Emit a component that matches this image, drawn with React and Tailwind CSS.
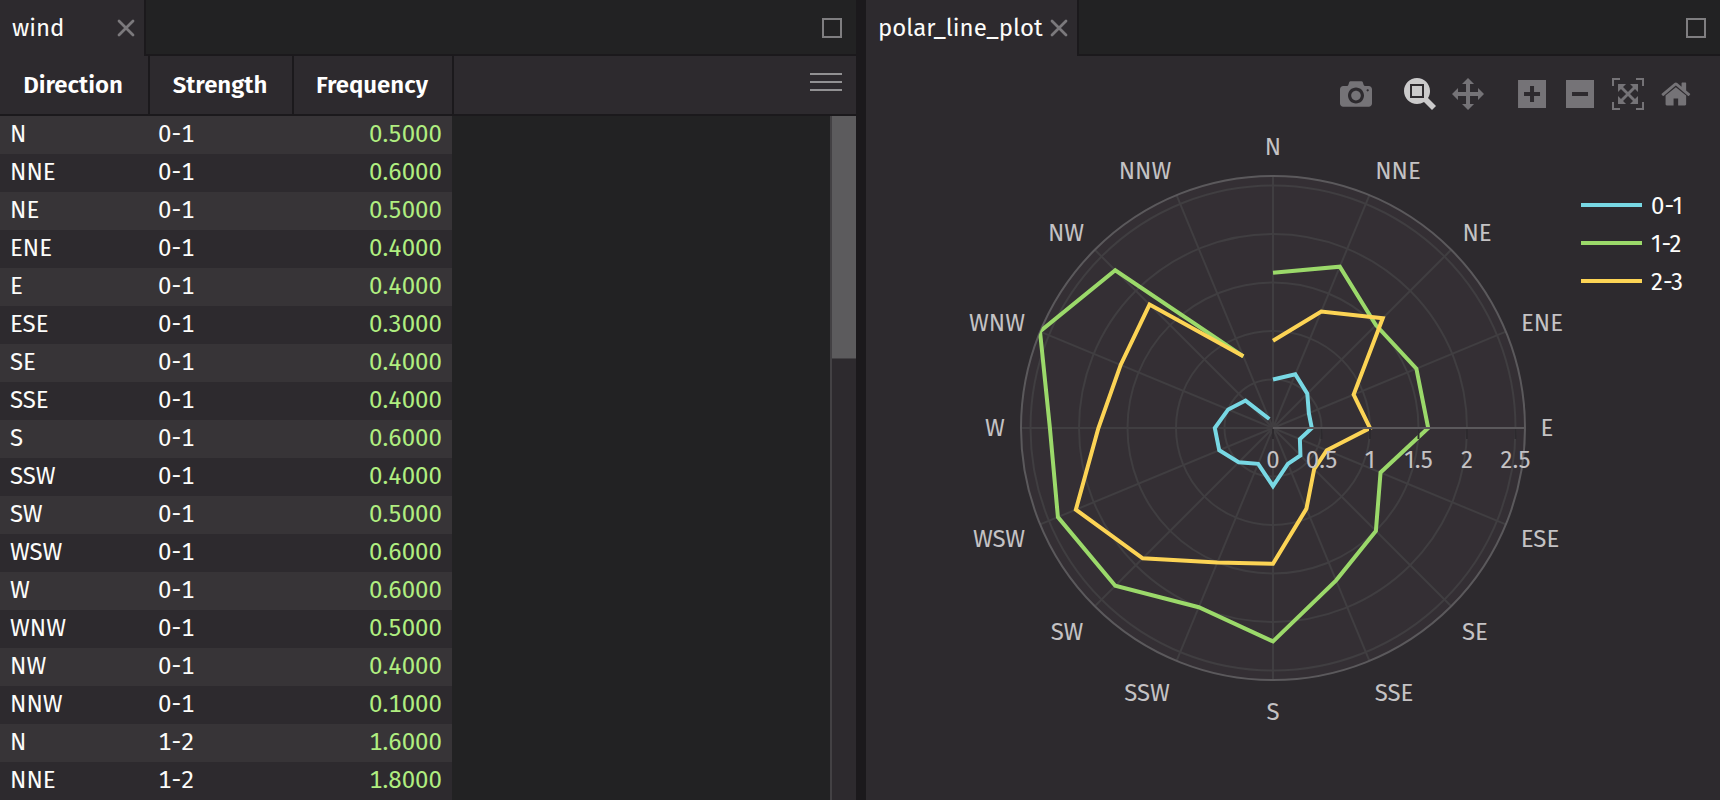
const DIRECTIONS = ['N', 'NNE', 'NE', 'ENE', 'E', 'ESE', 'SE', 'SSE', 'S', 'SSW', 'SW', 'WSW', 'W', 'WNW', 'NW', 'NNW'];

const SERIES = [
  { name: '0-1', color: '#78d8e4', values: [0.5, 0.6, 0.5, 0.4, 0.4, 0.3, 0.4, 0.4, 0.6, 0.4, 0.5, 0.6, 0.6, 0.5, 0.4, 0.1] },
  { name: '1-2', color: '#9bd96a', values: [1.6, 1.8, 1.5, 1.6, 1.6, 1.2, 1.5, 1.7, 2.2, 2.0, 2.3, 2.4, 2.3, 2.6, 2.3, 0.8] },
  { name: '2-3', color: '#fcd455', values: [0.9, 1.3, 1.6, 0.9, 1.0, 0.6, 0.6, 0.9, 1.4, 1.5, 1.9, 2.2, 1.8, 1.7, 1.8, 0.8] },
];

const ROWS = SERIES.flatMap((s) => s.values.map((v, i) => [DIRECTIONS[i], s.name, v.toFixed(4)])).slice(0, 18);

const CX = 407;
const CY = 308;
const UNIT = 97;
const RADIUS = 252;

const LABELS = [
  ['N', 407, 27], ['NNE', 532, 51], ['NE', 611, 113], ['ENE', 676, 203],
  ['E', 681, 308], ['ESE', 674, 419], ['SE', 609, 512], ['SSE', 528, 573],
  ['S', 407, 592], ['SSW', 281, 573], ['SW', 201, 512], ['WSW', 133, 419],
  ['W', 129, 308], ['WNW', 131, 203], ['NW', 200, 113], ['NNW', 279, 51],
];

const ICONS = {
  camera: [1000, 'm500 450c-83 0-150-67-150-150 0-83 67-150 150-150 83 0 150 67 150 150 0 83-67 150-150 150z m400 150h-120c-16 0-34 13-39 29l-31 93c-6 15-23 28-40 28h-340c-16 0-34-13-39-28l-31-94c-6-15-23-28-40-28h-120c-55 0-100-45-100-100v-450c0-55 45-100 100-100h800c55 0 100 45 100 100v450c0 55-45 100-100 100z m-400-550c-138 0-250 112-250 250 0 138 112 250 250 250 138 0 250-112 250-250 0-138-112-250-250-250z m365 380c-19 0-35 16-35 35 0 19 16 35 35 35 19 0 35-16 35-35 0-19-16-35-35-35z'],
  zoom: [1000, 'm1000-25l-250 251c40 63 63 138 63 218 0 224-182 406-407 406-224 0-406-182-406-406s183-406 407-406c80 0 155 22 218 62l250-250 125 125z m-812 250l0 438 437 0 0-438-437 0z m62 375l313 0 0-312-313 0 0 312z'],
  pan: [1000, 'm1000 350l-187 188 0-125-250 0 0 250 125 0-188 187-187-187 125 0 0-250-250 0 0 125-188-188 186-187 0 125 252 0 0-250-125 0 187-188 188 188-125 0 0 250 250 0 0-126 187 188z'],
  plus: [875, 'm1 787l0-875 875 0 0 875-875 0z m687-500l-187 0 0-187-125 0 0 187-188 0 0 125 188 0 0 187 125 0 0-187 187 0 0-125z'],
  minus: [875, 'm0 788l0-876 876 0 0 876-876 0z m688-500l-500 0 0 125 500 0 0-125z'],
  autoscale: [1000, 'm250 850l-187 0-63 0 0-62 0-188 63 0 0 188 187 0 0 62z m688 0l-188 0 0-62 188 0 0-188 62 0 0 188 0 62-62 0z m-875-938l0 188-63 0 0-188 0-62 63 0 187 0 0 62-187 0z m875 188l0-188-188 0 0-62 188 0 62 0 0 62 0 188-62 0z m-125 188l-1 0-93-94-156 156 156 156 92-93 2 0 0 250-250 0 0-2 93-92-156-156-156 156 94 92 0 2-250 0 0-250 0 0 93 93 157-156-157-156-93 94 0 0 0-250 250 0 0 0-94 93 156 157 156-157-93-93 0 0 250 0 0 250z'],
  home: [928, 'm786 296v-267q0-15-11-26t-25-10h-214v214h-143v-214h-214q-15 0-25 10t-11 26v267q0 1 0 2t0 2l321 264 321-264q1-1 1-4z m124 39l-34-41q-5-5-12-6h-2q-7 0-12 3l-386 322-386-322q-7-4-13-4-7 2-12 7l-35 41q-4 5-3 13t6 12l401 334q18 15 42 15t43-15l136-114v109q0 8 5 13t13 5h107q8 0 13-5t5-13v-227l122-102q5-5 6-12t-4-13z'],
};

function polar(index, r) {
  const a = (index * Math.PI) / 8;
  return [CX + Math.sin(a) * r, CY - Math.cos(a) * r];
}

function ToolButton({ icon, label, active = false }) {
  const [width, path] = ICONS[icon];
  return (
    <button type="button" aria-label={label} className="flex h-8 w-12 items-center justify-center">
      <svg viewBox={`0 0 ${width} 1000`} className={active ? 'h-8 fill-[#cbcacb]' : 'h-8 fill-[#757377]'}>
        <path transform="matrix(1 0 0 -1 0 850)" d={path} />
      </svg>
    </button>
  );
}

function TabBar({ title, tabClass }) {
  return (
    <div className="flex h-14 shrink-0">
      <div className={`flex items-center justify-between border-r-2 border-[#1b191c] bg-[#2d2a2e] pr-2 pl-3 ${tabClass}`}>
        <span className="text-[#fcfcfa]">{title}</span>
        <button type="button" aria-label={`Close ${title}`} className="flex h-5 w-5 shrink-0 items-center justify-center">
          <svg viewBox="0 0 20 20" className="size-5 fill-none stroke-[#7b797c]" strokeWidth="2.8" strokeLinecap="round">
            <path d="M3 3l14 14M17 3l-14 14" />
          </svg>
        </button>
      </div>
      <div className="flex flex-1 items-center justify-end border-b-2 border-[#1b191c] bg-[#222223] pt-0.5 pr-3.5">
        <button type="button" aria-label={`Maximize ${title}`} className="size-5 border-2 border-[#7f7e80]" />
      </div>
    </div>
  );
}

function TablePanel() {
  const th = 'border-r-2 border-b-2 border-[#1b191c] p-0 pr-0.5 text-center font-semibold text-white';
  return (
    <section className="flex min-w-0 flex-col overflow-hidden bg-[#222223]">
      <TabBar title="wind" tabClass="w-[146px]" />
      <div className="flex min-h-0 flex-1">
        <table className="w-[454px] shrink-0 table-fixed border-separate border-spacing-0 self-start tabular-nums">
          <thead>
            <tr className="h-[60px] bg-[#2d2a2e]">
              <th className={`w-[150px] ${th}`}>Direction</th>
              <th className={`w-[144px] ${th}`}>Strength</th>
              <th className={`w-[160px] ${th}`}>Frequency</th>
            </tr>
          </thead>
          <tbody className="text-[#fcfcfa]">
            {ROWS.map(([direction, strength, frequency], i) => (
              <tr key={i} className={i % 2 ? 'h-[38px] bg-[#2d2a2e]' : 'h-[38px] bg-[#373437]'}>
                <td className="p-0 pb-0.5 pl-2.5">{direction}</td>
                <td className="p-0 pb-0.5 pl-2">{strength}</td>
                <td className="border-r-2 border-[#222223] p-0 pr-2.5 pb-0.5 text-right text-[#b0ee80]">{frequency}</td>
              </tr>
            ))}
          </tbody>
        </table>
        <div className="flex flex-1 flex-col">
          <div className="flex h-[60px] shrink-0 justify-end border-b-2 border-[#1b191c] bg-[#2d2a2e] pt-4 pr-3.5">
            <button type="button" aria-label="Table options" className="flex h-5 w-8 flex-col justify-center gap-1.5">
              <span className="h-0.5 w-8 bg-[#929193]" />
              <span className="h-0.5 w-8 bg-[#929193]" />
              <span className="h-0.5 w-8 bg-[#929193]" />
            </button>
          </div>
          <div className="flex flex-1 justify-end">
            <div className="w-[26px] border-l-2 border-[#434144] bg-[#2d2a2e]">
              <div className="h-[243px] border-b border-[#434144] bg-[#5c5b5d]" />
            </div>
          </div>
        </div>
      </div>
    </section>
  );
}

function PolarChart() {
  return (
    <svg viewBox="0 0 854 680" className="w-full" role="img" aria-label="Wind frequency by direction" fontSize="24">
      <clipPath id="plot-area">
        <circle cx={CX} cy={CY} r={RADIUS} />
      </clipPath>
      <circle cx={CX} cy={CY} r={RADIUS} fill="#342f34" />
      <g fill="none" stroke="#403e41" strokeWidth="2">
        {[0.5, 1, 1.5, 2, 2.5].map((v) => (
          <circle key={v} cx={CX} cy={CY} r={v * UNIT} />
        ))}
        {DIRECTIONS.map((d, i) => {
          const [x, y] = polar(i, RADIUS);
          return <line key={d} x1={CX} y1={CY} x2={x} y2={y} />;
        })}
      </g>
      <circle cx={CX} cy={CY} r={RADIUS} fill="none" stroke="#5b595c" strokeWidth="2" />
      <g fill="none" strokeWidth="4" strokeMiterlimit="2" clipPath="url(#plot-area)">
        {SERIES.map((s) => (
          <polyline key={s.name} stroke={s.color} points={s.values.map((v, i) => polar(i, v * UNIT).join(',')).join(' ')} />
        ))}
      </g>
      <g strokeWidth="2">
        {[0, 0.5, 1, 1.5, 2, 2.5].map((v) => (
          <line key={v} x1={CX + v * UNIT} x2={CX + v * UNIT} y1={CY + 1} y2={CY + 11} stroke="#2d2a2e" />
        ))}
        <line x1={CX} x2={CX + RADIUS} y1={CY} y2={CY} stroke="#5b595c" />
      </g>
      <g fill="#c4c2c4" textAnchor="middle">
        {[0, 0.5, 1, 1.5, 2, 2.5].map((v) => (
          <text key={v} x={CX + v * UNIT} y={CY + 40}>{v}</text>
        ))}
        {LABELS.map(([label, x, y]) => (
          <text key={label} x={x} y={y + 8}>{label}</text>
        ))}
      </g>
      {SERIES.map((s, i) => (
        <g key={s.name}>
          <line x1="715" x2="776" y1={85 + i * 38} y2={85 + i * 38} stroke={s.color} strokeWidth="4" />
          <text x="785" y={94 + i * 38} fill="#fcfcfa">{s.name}</text>
        </g>
      ))}
    </svg>
  );
}

function PlotPanel() {
  return (
    <section className="flex min-w-0 flex-col overflow-hidden bg-[#2d2a2e]">
      <TabBar title="polar_line_plot" tabClass="w-[213px]" />
      <div className="flex h-16 shrink-0 items-start justify-end gap-4 pt-[22px] pr-5">
        <ToolButton icon="camera" label="Download plot" />
        <div className="flex">
          <ToolButton icon="zoom" label="Zoom" active />
          <ToolButton icon="pan" label="Pan" />
        </div>
        <div className="flex">
          <ToolButton icon="plus" label="Zoom in" />
          <ToolButton icon="minus" label="Zoom out" />
          <ToolButton icon="autoscale" label="Autoscale" />
          <ToolButton icon="home" label="Reset axes" />
        </div>
      </div>
      <PolarChart />
    </section>
  );
}

export default function App() {
  return (
    <main className="grid h-screen grid-cols-[428fr_427fr] gap-2.5 overflow-hidden bg-[#1b191c] font-['Fira_Sans','Noto_Sans',sans-serif] text-2xl leading-8">
      <TablePanel />
      <PlotPanel />
    </main>
  );
}
